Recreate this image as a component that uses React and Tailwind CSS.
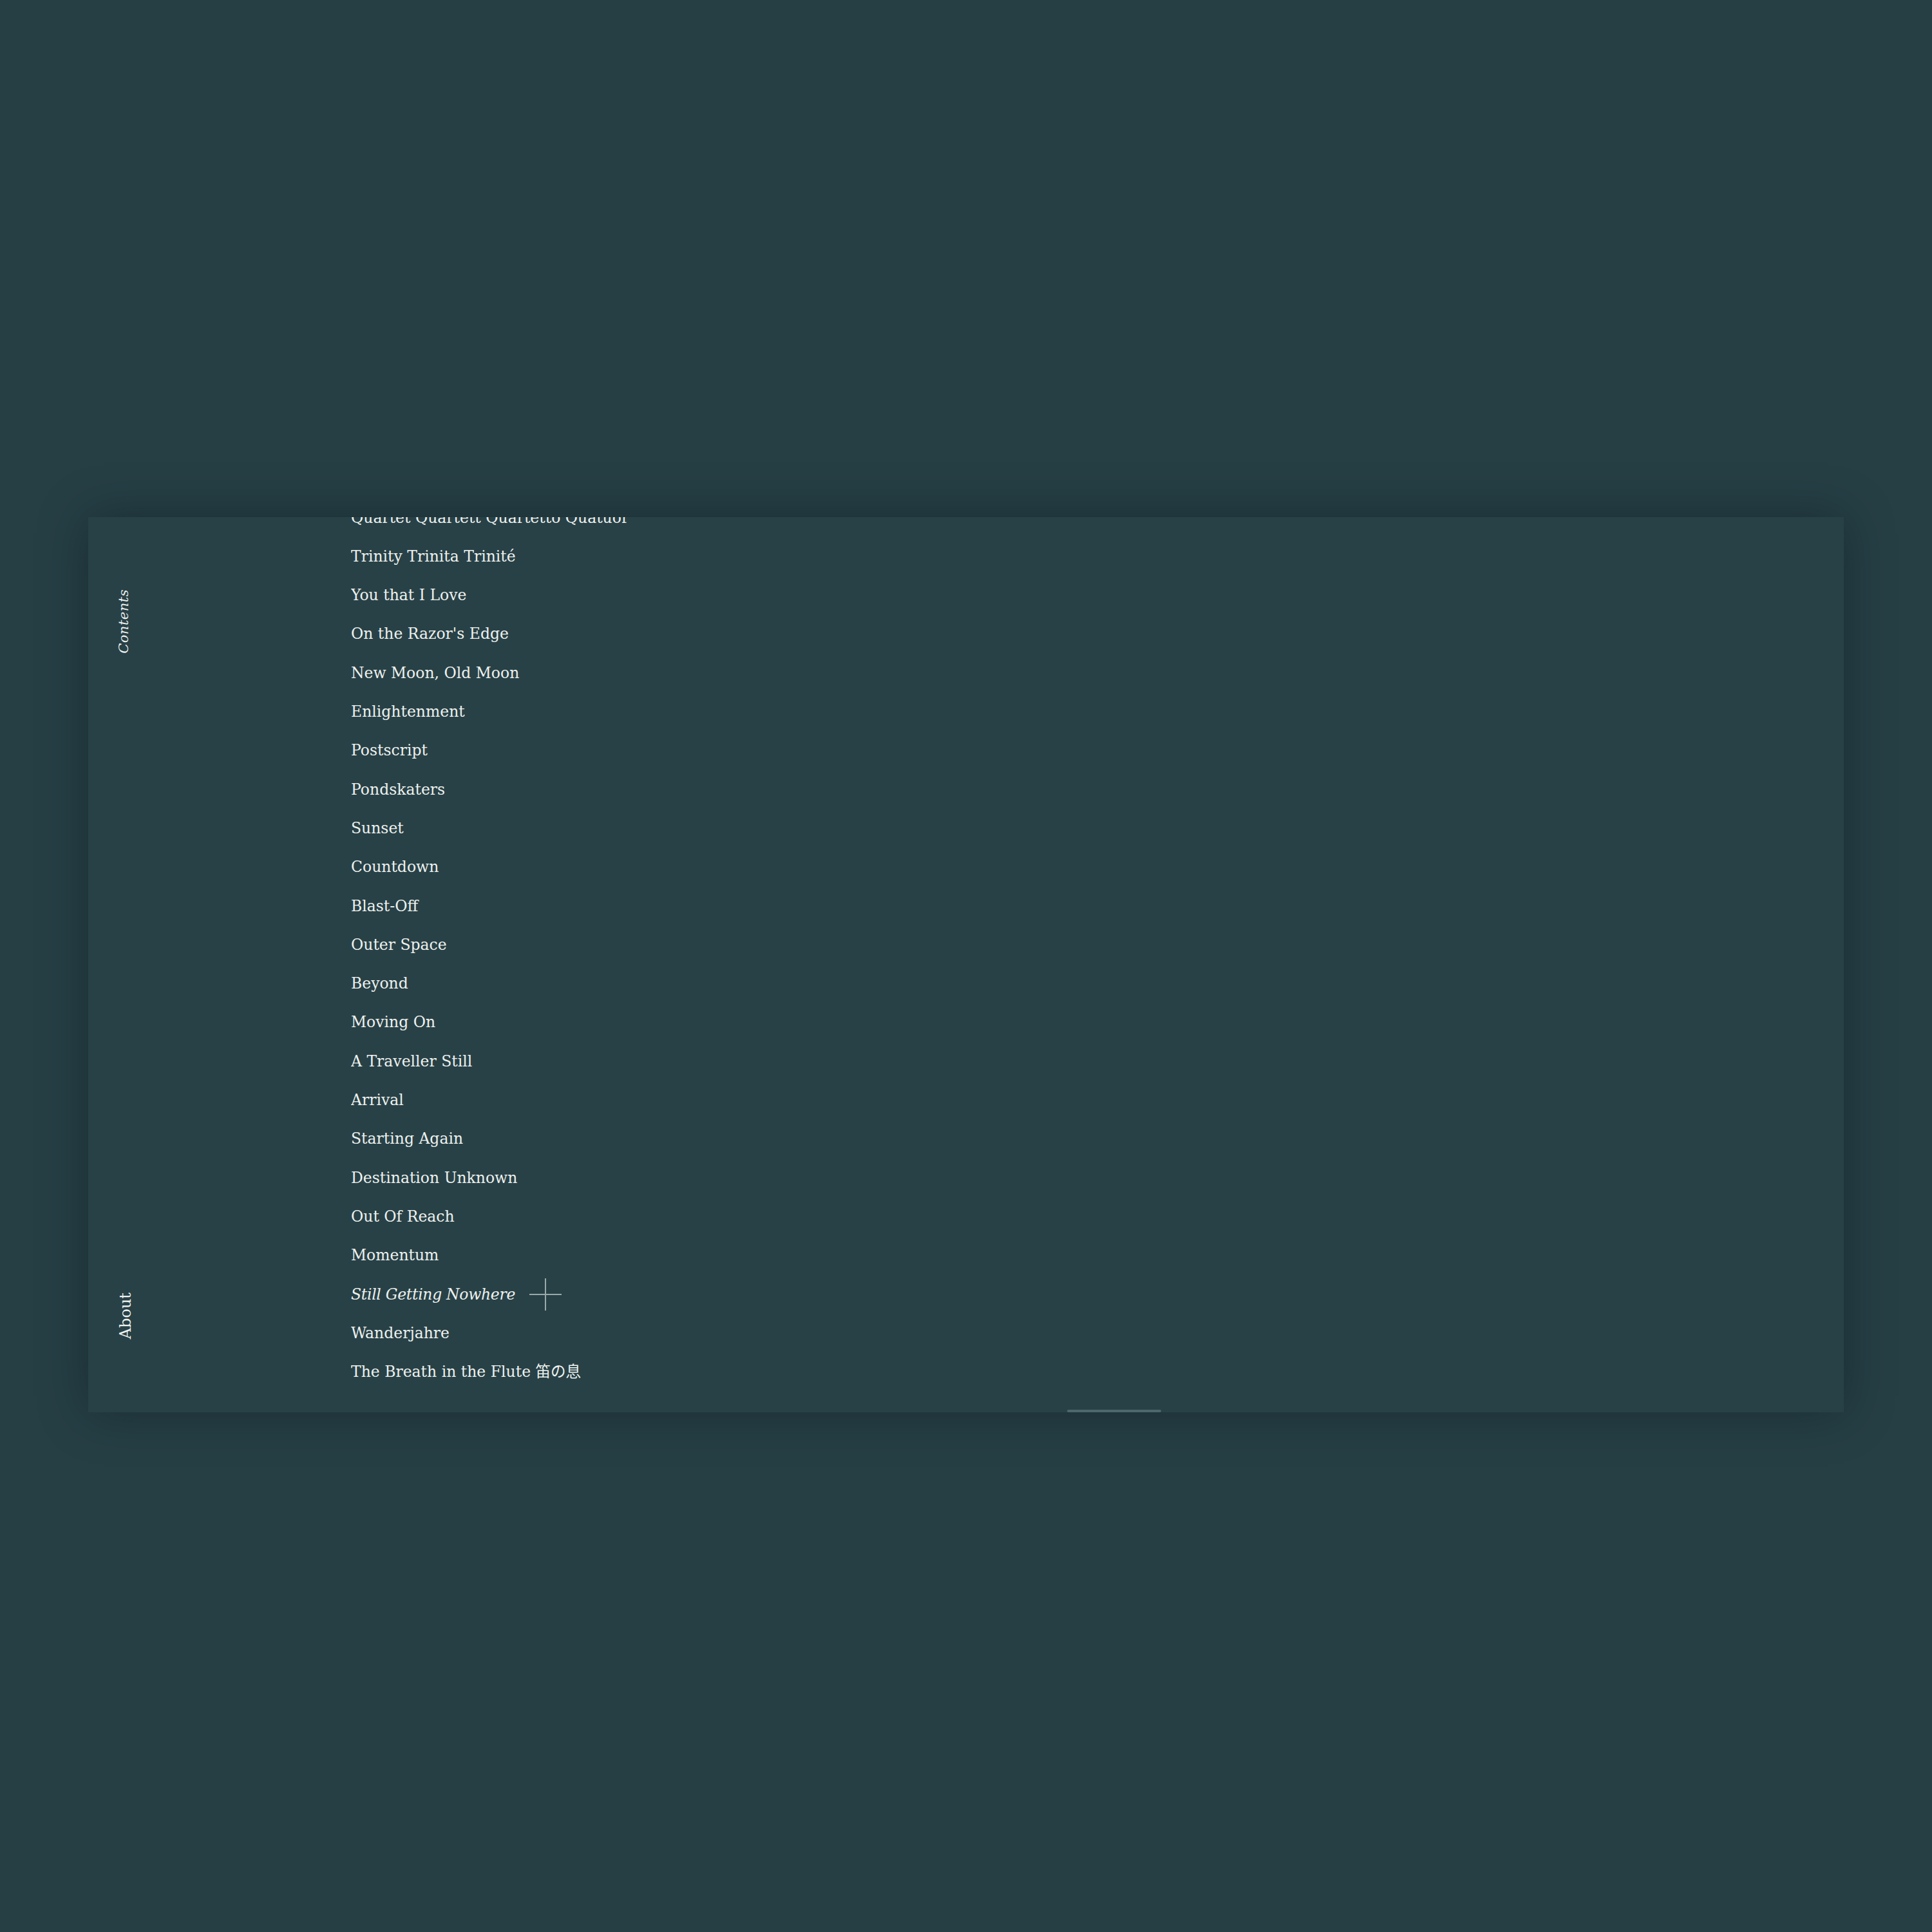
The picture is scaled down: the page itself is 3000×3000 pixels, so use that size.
const items = [
  'Quartet Quartett Quartetto Quatuor',
  'Trinity Trinita Trinité',
  'You that I Love',
  "On the Razor's Edge",
  'New Moon, Old Moon',
  'Enlightenment',
  'Postscript',
  'Pondskaters',
  'Sunset',
  'Countdown',
  'Blast-Off',
  'Outer Space',
  'Beyond',
  'Moving On',
  'A Traveller Still',
  'Arrival',
  'Starting Again',
  'Destination Unknown',
  'Out Of Reach',
  'Momentum',
  'Still Getting Nowhere',
  'Wanderjahre',
  'The Breath in the Flute 笛の息',
]

const active = 'Still Getting Nowhere'

export default function App() {
  return (
    <main
      className="w-[3000px] h-[3000px] bg-[#263f45] pt-[803px] pl-[137px]"
      style={{ fontFamily: '"DejaVu Serif", "Liberation Serif", "Noto Sans CJK JP", serif' }}
    >
      <div className="relative w-[2726px] h-[1390px] bg-[#284147] shadow-[0_0_70px_rgba(10,25,30,0.45)] flex">
        <aside className="w-[408px] flex flex-col justify-between items-start pl-[40px] pt-[112px] pb-[114px] text-[#eef1ee]">
          <span className="[writing-mode:vertical-rl] rotate-180 italic text-[21px] tracking-[0.5px]">Contents</span>
          <span className="[writing-mode:vertical-rl] rotate-180 text-[24px]">About</span>
        </aside>

        <div className="flex-1 overflow-hidden flex flex-col justify-end pb-[32px]">
          <ul className="flex flex-col">
            {items.map((t) => (
              <li key={t} className="h-[60.3px] flex items-center shrink-0 text-[23.5px] text-[#eef1ee] leading-none">
                {t === active ? (
                  <>
                    <span className="italic tracking-[-0.3px]">{t}</span>
                    <span className="relative ml-[22px] w-[50px] h-[50px] shrink-0">
                      <span className="absolute left-0 right-0 top-[24px] h-[2px] bg-[#98aaa8]" />
                      <span className="absolute top-0 bottom-0 left-[24px] w-[2px] bg-[#98aaa8]" />
                    </span>
                  </>
                ) : (
                  <span>{t}</span>
                )}
              </li>
            ))}
          </ul>
        </div>

        <span className="absolute bottom-0 left-[1520px] w-[146px] h-[4px] bg-[#4d676b] rounded-full" />
      </div>
    </main>
  )
}
